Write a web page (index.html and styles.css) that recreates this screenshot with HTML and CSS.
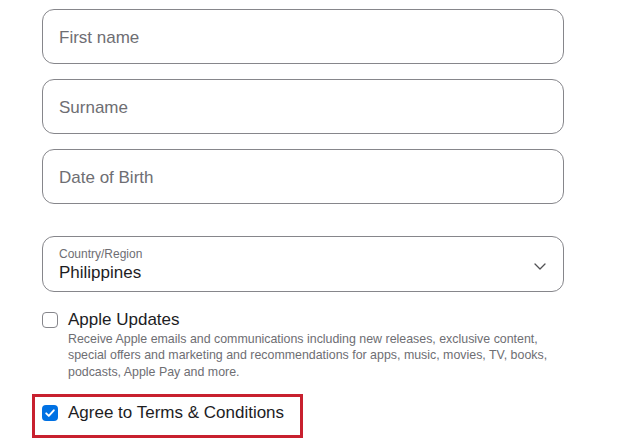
FILE: index.html
```html
<!DOCTYPE html>
<html lang="en">
<head>
<meta charset="utf-8">
<title>Create Apple Account</title>
<link rel="stylesheet" href="styles.css">
</head>
<body>
<form class="form">
  <div class="field"><span class="placeholder">First name</span></div>
  <div class="field"><span class="placeholder">Surname</span></div>
  <div class="field"><span class="placeholder">Date of Birth</span></div>

  <div class="field select">
    <div class="select-text">
      <span class="select-label">Country/Region</span>
      <span class="select-value">Philippines</span>
    </div>
    <svg class="chevron" width="12" height="7" viewBox="0 0 12 7" aria-hidden="true">
      <path d="M1 1l5 5 5-5" fill="none" stroke="#515154" stroke-width="1.3" stroke-linecap="round" stroke-linejoin="round"/>
    </svg>
  </div>

  <div class="check-row updates">
    <span class="box"></span>
    <div class="check-text">
      <div class="check-title">Apple Updates</div>
      <p class="check-desc">Receive Apple emails and communications including new releases, exclusive content, special offers and marketing and recommendations for apps, music, movies, TV, books, podcasts, Apple Pay and more.</p>
    </div>
  </div>

  <div class="highlight">
    <div class="check-row">
      <span class="box checked">
        <svg width="16" height="16" viewBox="0 0 16 16" aria-hidden="true">
          <path d="M4.2 8.3l2.6 2.6 5-5.6" fill="none" stroke="#fff" stroke-width="1.9" stroke-linecap="round" stroke-linejoin="round"/>
        </svg>
      </span>
      <div class="check-text">
        <div class="check-title">Agree to Terms &amp; Conditions</div>
      </div>
    </div>
  </div>
</form>
</body>
</html>
```

FILE: styles.css
```css
* { box-sizing: border-box; }

body {
  margin: 0;
  background: #ffffff;
  font-family: "Liberation Sans", Arial, sans-serif;
  color: #1d1d1f;
}

.form {
  width: 564px;
  padding: 9px 0 0 42px;
  display: flex;
  flex-direction: column;
}

.field {
  height: 55px;
  width: 522px;
  border: 1px solid #86868b;
  border-radius: 12px;
  padding: 2px 16px 0;
  display: flex;
  align-items: center;
  margin-bottom: 15px;
}

.placeholder {
  font-size: 17px;
  line-height: 20px;
  color: #6e6e73;
}

.field.select {
  height: 56px;
  margin-top: 17px;
  margin-bottom: 0;
  align-items: flex-start;
  padding-top: 10px;
  justify-content: space-between;
}

.select-text {
  display: flex;
  flex-direction: column;
}

.select-label {
  font-size: 12px;
  line-height: 14px;
  color: #6e6e73;
}

.select-value {
  margin-top: 2px;
  font-size: 17px;
  line-height: 20px;
  color: #1d1d1f;
}

.chevron {
  margin-top: 16px;
  margin-right: 1px;
}

.check-row {
  display: flex;
  align-items: flex-start;
  gap: 10px;
}

.updates {
  margin-top: 18px;
}

.box {
  flex: none;
  width: 16px;
  height: 16px;
  margin-top: 2px;
  border: 1px solid #86868b;
  border-radius: 4px;
  background: #fff;
  display: flex;
}

.box.checked {
  border: none;
  background: #0071e3;
}

.check-title {
  font-size: 17px;
  line-height: 20px;
  color: #1d1d1f;
}

.check-desc {
  margin: 0.5px 0 0;
  width: 490px;
  font-size: 12.4px;
  line-height: 16.5px;
  color: #6e6e73;
}

.highlight {
  align-self: flex-start;
  margin: 14px 0 0 -10px;
  border: 3px solid #c8202f;
  padding: 6px 16px 12px 7px;
}
```
